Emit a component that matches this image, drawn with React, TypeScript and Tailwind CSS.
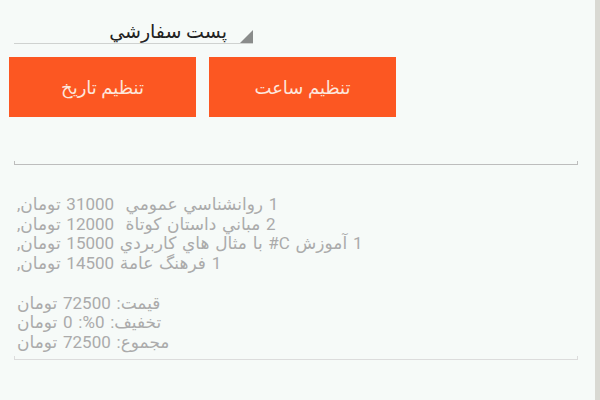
import React from "react";

const font = { fontFamily: "Roboto, 'DejaVu Sans', sans-serif" };

export default function App() {
  return (
    <div className="w-[600px] h-[400px] bg-[#f6faf8] flex overflow-hidden" style={font}>
      <div className="flex-1 flex flex-col">
        {/* spinner */}
        <div className="ml-[14px] mt-[20px] w-[239px] h-[24px] relative border-b border-[#cfd2d0]">
          <div dir="rtl" className="pr-[26px] text-[19px] leading-[24px] text-[#222]">پست سفارشي</div>
          <div className="absolute right-0 bottom-0 w-0 h-0 border-l-[13px] border-l-transparent border-b-[13px] border-b-[#8a8c8b]" />
        </div>

        {/* buttons */}
        <div className="ml-[9px] mt-[13px] flex gap-[13px]">
          <button className="w-[187px] h-[60px] bg-[#fc5722] text-[#fde6dc] text-[18px] font-medium" dir="rtl">تنظیم تاریخ</button>
          <button className="w-[187px] h-[60px] bg-[#fc5722] text-[#fde6dc] text-[18px] font-medium" dir="rtl">تنظیم ساعت</button>
        </div>

        {/* edit text 1 */}
        <div className="ml-[14px] w-[564px] mt-[44px] h-[4px] border-x border-b border-[#bdbdbd]" />

        {/* text block */}
        <div className="ml-[17px] mt-[30px] w-[560px]">
          <div dir="rtl" className="text-left text-[17px] leading-[19.7px] text-[#ababab] whitespace-pre [word-spacing:1.5px]">
            <div>1 روانشناسي عمومي  31000 تومان,</div>
            <div>2 مباني داستان كوتاة  12000 تومان,</div>
            <div>1 آموزش C# با مثال هاي كاربردي 15000 تومان,</div>
            <div>1 فرهنگ عامة 14500 تومان,</div>
            <div className="h-[19.7px]" />
            <div>قيمت: 72500 تومان</div>
            <div>تخفيف: 0%: 0 تومان</div>
            <div>مجموع: 72500 تومان</div>
          </div>
        </div>
        <div className="ml-[14px] w-[564px] mt-[3px] h-[4px] border-x border-b border-[#dcdcdc]" />
      </div>
      <div className="w-[5px] bg-[#d9d9d3]" />
    </div>
  );
}
